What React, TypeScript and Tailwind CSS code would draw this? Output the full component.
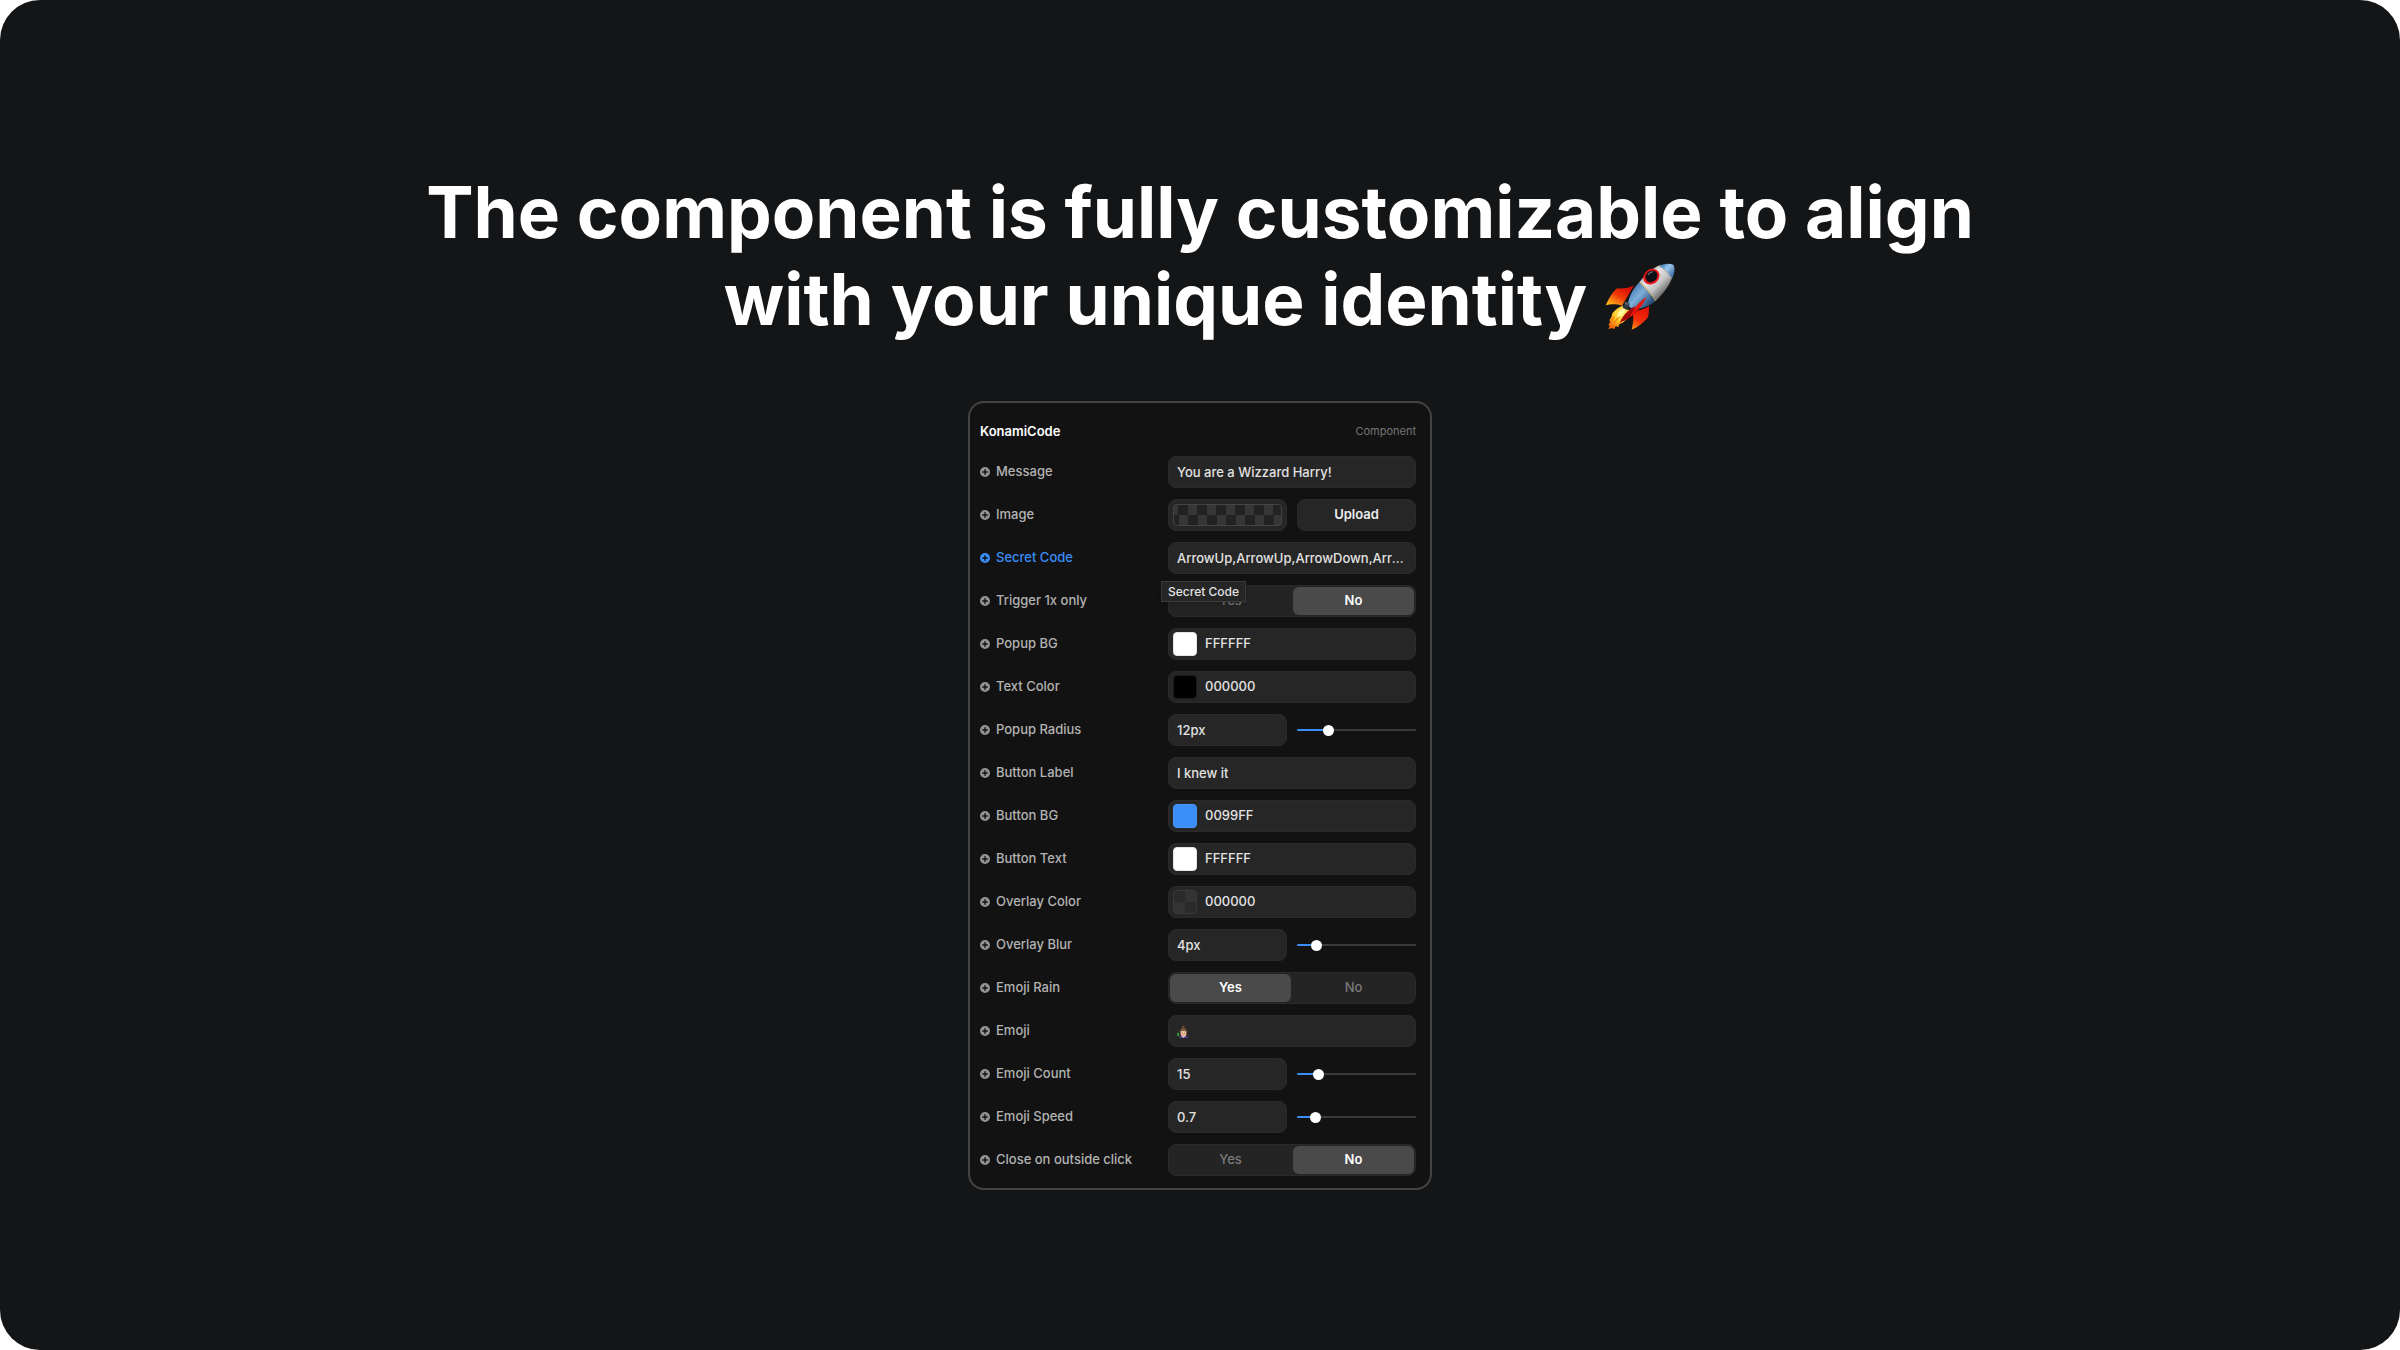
import { useState, type ReactNode } from 'react';

type Option = 'Yes' | 'No';

const fieldClass =
  'h-8 w-full min-w-0 rounded-lg border border-[#2a2a2a] bg-[#262626] px-2 text-[13px] font-medium text-[#e2e2e2] text-ellipsis outline-none';

const PlusIcon = () => (
  <svg viewBox="0 0 10 10" className="size-2.5 shrink-0" aria-hidden="true">
    <path
      fill="currentColor"
      fillRule="evenodd"
      d="M5 0a5 5 0 1 1 0 10A5 5 0 0 1 5 0Zm-.7 2.3v2h-2v1.4h2v2h1.4v-2h2V4.3h-2v-2Z"
    />
  </svg>
);

const RocketIcon = () => (
  <svg viewBox="28 30 216 216" className="inline-block size-[72px] align-[-8px]" role="img" aria-label="Rocket">
    <defs>
      <linearGradient id="hull" x1="120" y1="80" x2="190" y2="150" gradientUnits="userSpaceOnUse">
        <stop offset="0" stopColor="#8e9498" />
        <stop offset=".35" stopColor="#e4e4e2" />
        <stop offset=".65" stopColor="#c5c6c5" />
        <stop offset="1" stopColor="#5c5c5c" />
      </linearGradient>
      <linearGradient id="band" x1="110" y1="115" x2="165" y2="165" gradientUnits="userSpaceOnUse">
        <stop offset="0" stopColor="#4a7fb5" />
        <stop offset=".4" stopColor="#7fb0dc" />
        <stop offset="1" stopColor="#24466f" />
      </linearGradient>
      <linearGradient id="nose" x1="200" y1="40" x2="240" y2="75" gradientUnits="userSpaceOnUse">
        <stop offset="0" stopColor="#3d78b4" />
        <stop offset=".4" stopColor="#9cc9ef" />
        <stop offset="1" stopColor="#2a5c94" />
      </linearGradient>
      <linearGradient id="finLeft" x1="90" y1="105" x2="55" y2="165" gradientUnits="userSpaceOnUse">
        <stop offset="0" stopColor="#d90b05" />
        <stop offset=".5" stopColor="#f03a08" />
        <stop offset="1" stopColor="#ffb31a" />
      </linearGradient>
      <linearGradient id="finRight" x1="150" y1="170" x2="120" y2="235" gradientUnits="userSpaceOnUse">
        <stop offset="0" stopColor="#e01008" />
        <stop offset=".6" stopColor="#f4300a" />
        <stop offset="1" stopColor="#ff8a12" />
      </linearGradient>
      <radialGradient id="flame" cx="82" cy="188" r="48" gradientUnits="userSpaceOnUse">
        <stop offset="0" stopColor="#fff27a" />
        <stop offset=".5" stopColor="#ffc928" />
        <stop offset="1" stopColor="#f06a0a" />
      </radialGradient>
    </defs>
    <path fill="url(#finLeft)" d="M118 103c-16 9-34 11-50 9-14 10-24 28-35 51 14-4 33-4 49 1Z" />
    <path fill="url(#finRight)" d="M132 178c10-2 22-7 31-13 0 14 0 26-4 35-12 14-29 28-48 36 4-16 6-34 4-46Z" />
    <path
      fill="url(#flame)"
      d="M84 164c-12 3-23 13-31 23l-3 12-6 8 3 6-6 8 4 4-4 10 10-4 8 3 4-8 8 2 3-9 10-4c12-9 22-20 28-32Z"
    />
    <path fill="none" stroke="#f28411" strokeWidth="4" d="m75 193-17 24m35-24-19 26m-16-22-6 12" />
    <path fill="#fff8a6" d="M84 172c-11 8-15 18-17 28 11-6 20-13 27-24Z" />
    <path fill="url(#hull)" d="M134 94c17-24 40-44 65-53l36 31c-8 28-27 54-52 78Z" />
    <path fill="url(#band)" d="M134 94 183 150c-20 16-43 24-68 26l-16-13c4-27 15-49 35-69Z" />
    <path fill="none" stroke="#b9a25a" strokeWidth="3" d="M134 94c18 13 36 33 49 56" />
    <path fill="url(#nose)" d="M193 44c15-6 32-8 43-3 6 10 4 27-4 42-9-16-22-29-39-39Z" />
    <path fill="none" stroke="#9d9a8c" strokeWidth="2" d="M192 45c17 9 31 22 40 39" />
    <ellipse cx="170" cy="77" rx="26" ry="22" fill="#ed1720" transform="rotate(-38 170 77)" />
    <ellipse cx="170" cy="76" rx="20" ry="17" fill="#5d0909" transform="rotate(-38 170 76)" />
    <ellipse cx="171" cy="76" rx="18" ry="15" fill="#0d1014" transform="rotate(-38 171 76)" />
    <path fill="none" stroke="#5e6a75" strokeWidth="4" d="M160 72c3-6 9-9 15-10" />
    <path fill="#2b333b" d="m91 150 14 8-6 20-15-8Z" />
    <path fill="#56616b" d="m93 152 9 5-3 7-9-5Z" />
    <path fill="#a30a08" d="M76 214c10-23 25-38 46-49l-8 26c-12 12-23 18-38 23Z" />
    <path fill="#e8140e" d="M155 138c-21 14-41 37-50 61 20-14 39-34 50-61Z" />
  </svg>
);

const WizardIcon = () => (
  <svg viewBox="0 0 36 40" className="h-[13px] w-3" role="img" aria-label="Wizard">
    <path fill="#593c91" d="M7 40c1-6 6-8 12-8s13 2 15 8Z" />
    <path fill="#d9dce2" d="m13 33 6 6 7-6Z" />
    <path fill="#5a3a26" d="M8 19h23v14H8Z" />
    <path fill="#f0c6a6" d="M11 18h17v10c0 5-4 8-8 8s-9-3-9-8Z" />
    <path fill="#5f4930" d="M5 21c1-4 5-5 7-7 1-6 3-13 11-14-2 2-2 4 0 6 2 3 3 6 4 9 3 2 6 3 6 6-9-3-19-3-28 0Z" />
    <path fill="#a7834e" d="M11 15c5-2 11-2 17 0v3c-6-2-12-2-18 0Z" />
    <path stroke="#2c2c2c" strokeWidth="2" d="M16 24v3m7-3v3" />
    <path stroke="#c66" strokeWidth="2" d="M17 31h5" />
    <path stroke="#3ed14c" strokeWidth="4" d="M3 24v10" />
    <path stroke="#1d7f31" strokeWidth="3" d="m4 33 4 4" />
  </svg>
);

interface RowProps {
  id: string;
  label: string;
  active?: boolean;
  children: ReactNode;
}

const Row = ({ id, label, active, children }: RowProps) => (
  <div className="flex items-center">
    <label
      htmlFor={id}
      className={
        active
          ? 'flex flex-1 items-center gap-1.5 text-[13px] font-medium text-[#3b8df8]'
          : 'flex flex-1 items-center gap-1.5 text-[13px] font-medium text-[#b3b3b3]'
      }
    >
      <span className={active ? 'text-[#3b8df8]' : 'text-[#929292]'}>
        <PlusIcon />
      </span>
      {label}
    </label>
    <div className="relative w-[248px]">{children}</div>
  </div>
);

const TextField = ({ id, value }: { id: string; value: string }) => (
  <input id={id} type="text" defaultValue={value} className={`block ${fieldClass}`} />
);

const ColorField = ({ id, value, swatch }: { id: string; value: string; swatch: string }) => (
  <div className="flex h-8 w-full items-center gap-2 rounded-lg border border-[#2a2a2a] bg-[#262626] pl-1">
    <button type="button" aria-label="Pick color" className={`size-6 shrink-0 rounded-[4px] border ${swatch}`} />
    <input
      id={id}
      type="text"
      defaultValue={value}
      className="min-w-0 flex-1 bg-transparent text-[13px] font-medium text-[#e2e2e2] outline-none"
    />
  </div>
);

interface SliderFieldProps {
  id: string;
  text: string;
  percent: number;
}

const SliderField = ({ id, text, percent }: SliderFieldProps) => {
  const [value, setValue] = useState(percent);

  return (
    <div className="grid grid-cols-2 items-center gap-2.5">
      <TextField id={id} value={text} />
      <input
        type="range"
        aria-label={`${id} slider`}
        min={0}
        max={100}
        value={value}
        onChange={(e) => setValue(Number(e.target.value))}
        style={{ backgroundImage: `linear-gradient(to right, #3b8df8 ${value + 3}%, #3a3a3a ${value + 3}%)` }}
        className="h-0.5 w-full appearance-none rounded-full outline-none [&::-webkit-slider-thumb]:size-[11px] [&::-webkit-slider-thumb]:appearance-none [&::-webkit-slider-thumb]:rounded-full [&::-webkit-slider-thumb]:bg-white"
      />
    </div>
  );
};

const Toggle = ({ id, initial }: { id: string; initial: Option }) => {
  const [selected, setSelected] = useState<Option>(initial);
  const options: Option[] = ['Yes', 'No'];

  return (
    <div role="radiogroup" className="flex h-8 w-full gap-0.5 rounded-lg border border-[#2a2a2a] bg-[#242424] p-px">
      {options.map((option) => (
        <label
          key={option}
          className={
            selected === option
              ? 'relative flex flex-1 items-center justify-center rounded-md bg-[#4a4a4a] text-[13px] font-semibold text-white'
              : 'relative flex flex-1 items-center justify-center rounded-md text-[13px] font-medium text-[#7a7a7a]'
          }
        >
          <input
            id={option === 'Yes' ? id : undefined}
            type="radio"
            name={id}
            checked={selected === option}
            onChange={() => setSelected(option)}
            className="sr-only"
          />
          {option}
        </label>
      ))}
    </div>
  );
};

const App = () => {
  return (
    <div className="bg-white font-['Inter',sans-serif] antialiased">
      <main className="flex min-h-screen flex-col items-center gap-[58px] rounded-[40px] bg-[#141517] pt-[169px] pb-20">
        <h1 className="text-center text-[71px] leading-[87px] font-bold text-white">
          The component is fully customizable to align
          <br />
          with your unique identity <RocketIcon />
        </h1>

        <section className="flex w-[464px] flex-col gap-[11px] rounded-2xl border-2 border-[#444444] bg-[#121212] pt-5 pr-3.5 pb-3 pl-2.5">
          {/* Header */}
          <header className="flex h-[22px] items-start justify-between leading-4">
            <h2 className="text-[13px] font-semibold text-white">KonamiCode</h2>
            <span className="text-[11px] text-[#757575]">Component</span>
          </header>

          <Row id="message" label="Message">
            <TextField id="message" value="You are a Wizzard Harry!" />
          </Row>
          <Row id="image" label="Image">
            <div className="grid grid-cols-2 gap-2.5">
              <div className="flex h-8 rounded-lg border border-[#2a2a2a] bg-[#262626] p-1">
                <div className="flex-1 rounded-[4px] border border-[#444444] bg-[conic-gradient(#222222_25%,#363636_0_50%,#222222_0_75%,#363636_0)] bg-size-[19px_20px] bg-position-[-5px_0px]" />
              </div>
              <button
                id="image"
                type="button"
                className="h-8 rounded-lg border border-[#2a2a2a] bg-[#262626] text-[13px] font-semibold text-[#eeeeee]"
              >
                Upload
              </button>
            </div>
          </Row>
          <Row id="secret-code" label="Secret Code" active>
            <TextField id="secret-code" value="ArrowUp,ArrowUp,ArrowDown,ArrowDown,ArrowLeft,ArrowRight" />
          </Row>
          <Row id="trigger" label="Trigger 1x only">
            <Toggle id="trigger" initial="No" />
            {/* Tooltip of the row above */}
            <div
              role="tooltip"
              className="absolute -top-1 -left-[7px] border border-[#3a3a3a] bg-[#262626] px-1.5 text-xs leading-[19px] font-medium whitespace-nowrap text-[#e2e2e2] shadow-md"
            >
              Secret Code
            </div>
          </Row>
          <Row id="popup-bg" label="Popup BG">
            <ColorField id="popup-bg" value="FFFFFF" swatch="border-[#e4e4e4] bg-white" />
          </Row>
          <Row id="text-color" label="Text Color">
            <ColorField id="text-color" value="000000" swatch="border-[#1a1a1a] bg-black" />
          </Row>
          <Row id="popup-radius" label="Popup Radius">
            <SliderField id="popup-radius" text="12px" percent={24} />
          </Row>
          <Row id="button-label" label="Button Label">
            <TextField id="button-label" value="I knew it" />
          </Row>
          <Row id="button-bg" label="Button BG">
            <ColorField id="button-bg" value="0099FF" swatch="border-[#4a95f5] bg-[#3b8df8]" />
          </Row>
          <Row id="button-text" label="Button Text">
            <ColorField id="button-text" value="FFFFFF" swatch="border-[#e4e4e4] bg-white" />
          </Row>
          <Row id="overlay-color" label="Overlay Color">
            <ColorField
              id="overlay-color"
              value="000000"
              swatch="border-[#3a3a3a] bg-[conic-gradient(#333333_25%,#2a2a2a_0_50%,#333333_0_75%,#2a2a2a_0)]"
            />
          </Row>
          <Row id="overlay-blur" label="Overlay Blur">
            <SliderField id="overlay-blur" text="4px" percent={13} />
          </Row>
          <Row id="emoji-rain" label="Emoji Rain">
            <Toggle id="emoji-rain" initial="Yes" />
          </Row>
          <Row id="emoji" label="Emoji">
            <button id="emoji" type="button" className={`flex items-center ${fieldClass}`}>
              <WizardIcon />
            </button>
          </Row>
          <Row id="emoji-count" label="Emoji Count">
            <SliderField id="emoji-count" text="15" percent={15} />
          </Row>
          <Row id="emoji-speed" label="Emoji Speed">
            <SliderField id="emoji-speed" text="0.7" percent={12} />
          </Row>
          <Row id="outside-click" label="Close on outside click">
            <Toggle id="outside-click" initial="No" />
          </Row>
        </section>
      </main>
    </div>
  );
};

export default App;
